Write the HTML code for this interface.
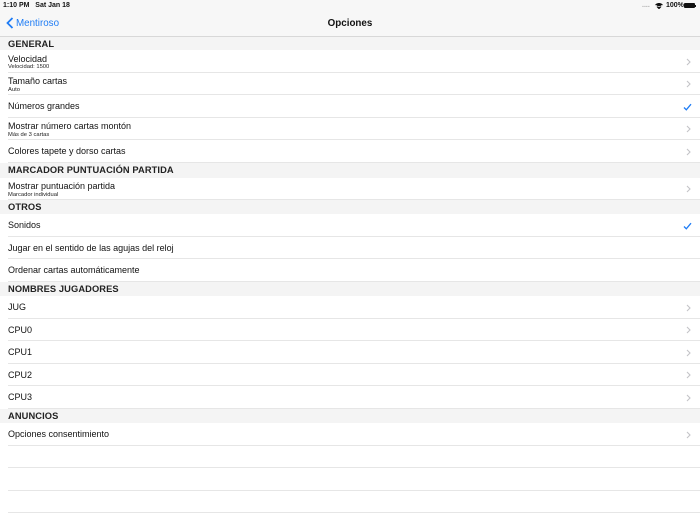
<!DOCTYPE html>
<html><head><meta charset="utf-8"><style>
*{margin:0;padding:0;box-sizing:border-box}
body{width:700px;height:525px;overflow:hidden;background:#fff;font-family:"Liberation Sans",sans-serif;color:#000;position:relative}
.nav{position:absolute;left:0;top:0;width:700px;height:37px;background:#f7f7f7;border-bottom:1px solid #d8d8d8}
.sb{position:absolute;top:2px;font-size:7px;font-weight:bold;color:#111}
.h{position:absolute;left:0;width:700px;background:#f4f4f4;font-size:9.3px;font-weight:bold;color:#222;padding-left:8px;letter-spacing:0.1px}
.r{position:absolute;left:0;width:700px;height:22.6px;background:#fff}
.r::after{content:"";position:absolute;left:8px;right:0;bottom:0;height:1px;background:#e6e6e6}
.t{position:absolute;left:8px;font-size:9px;color:#111}
.s{position:absolute;left:8px;font-size:5.8px;color:#222}
.ch{position:absolute;right:9px;top:7.5px;width:5px;height:8px}
.ck{position:absolute;right:8px;top:7.5px;width:9px;height:8px}
</style></head><body>
<div class="nav">
<div class="sb" style="left:3px">1:10 PM&nbsp;&nbsp; Sat Jan 18</div>
<div class="sb" style="left:642px;color:#aaa">....</div>
<svg style="position:absolute;left:655px;top:3px" width="8" height="6" viewBox="0 0 8 6"><path d="M0.5 2 Q4 -1 7.5 2 M1.8 3.3 Q4 1.2 6.2 3.3 M3 4.6 L4 5.6 L5 4.6 Z" stroke="#111" stroke-width="1.1" fill="#111"/></svg>
<div class="sb" style="left:666px">100%</div>
<div style="position:absolute;left:684px;top:3px;width:11px;height:5px;background:#111;border-radius:1px"></div>
<div style="position:absolute;left:695px;top:4.5px;width:1px;height:2px;background:#111"></div>
<svg style="position:absolute;left:6px;top:17px" width="8" height="12" viewBox="0 0 8 12"><path d="M6.5 1 L1.5 6 L6.5 11" stroke="#1e7cf5" stroke-width="1.8" fill="none"/></svg>
<div style="position:absolute;left:16px;top:18px;font-size:9.8px;color:#1e7cf5">Mentiroso</div>
<div style="position:absolute;left:0;width:700px;top:18px;text-align:center;font-size:9.8px;font-weight:bold;color:#111">Opciones</div>
</div>

<div class="h" style="top:37px;height:13px;line-height:14px">GENERAL</div>
<div class="r" style="top:50px"><div class="t" style="top:3.5px">Velocidad</div><div class="s" style="top:14px">Velocidad: 1500</div><svg class="ch" viewBox="0 0 5 8"><path d="M1 1L4 4L1 7" stroke="#c4c4c8" stroke-width="1.1" fill="none"/></svg></div>
<div class="r" style="top:72.6px"><div class="t" style="top:3.5px">Tamaño cartas</div><div class="s" style="top:14px">Auto</div><svg class="ch" viewBox="0 0 5 8"><path d="M1 1L4 4L1 7" stroke="#c4c4c8" stroke-width="1.1" fill="none"/></svg></div>
<div class="r" style="top:95.2px"><div class="t" style="top:6px">Números grandes</div><svg class="ck" viewBox="0 0 9 8"><path d="M1 4.5L3.3 6.8L8 1.2" stroke="#1e7cf5" stroke-width="1.3" fill="none"/></svg></div>
<div class="r" style="top:117.8px"><div class="t" style="top:3.5px">Mostrar número cartas montón</div><div class="s" style="top:14px">Más de 3 cartas</div><svg class="ch" viewBox="0 0 5 8"><path d="M1 1L4 4L1 7" stroke="#c4c4c8" stroke-width="1.1" fill="none"/></svg></div>
<div class="r" style="top:140.4px"><div class="t" style="top:6px">Colores tapete y dorso cartas</div><svg class="ch" viewBox="0 0 5 8"><path d="M1 1L4 4L1 7" stroke="#c4c4c8" stroke-width="1.1" fill="none"/></svg></div>

<div class="h" style="top:163px;height:14.5px;line-height:15px">MARCADOR PUNTUACIÓN PARTIDA</div>
<div class="r" style="top:177.5px"><div class="t" style="top:3.5px">Mostrar puntuación partida</div><div class="s" style="top:14px">Marcador individual</div><svg class="ch" viewBox="0 0 5 8"><path d="M1 1L4 4L1 7" stroke="#c4c4c8" stroke-width="1.1" fill="none"/></svg></div>

<div class="h" style="top:200px;height:14px;line-height:15px">OTROS</div>
<div class="r" style="top:214px"><div class="t" style="top:6px">Sonidos</div><svg class="ck" viewBox="0 0 9 8"><path d="M1 4.5L3.3 6.8L8 1.2" stroke="#1e7cf5" stroke-width="1.3" fill="none"/></svg></div>
<div class="r" style="top:236.6px"><div class="t" style="top:6px">Jugar en el sentido de las agujas del reloj</div></div>
<div class="r" style="top:259.2px"><div class="t" style="top:6px">Ordenar cartas automáticamente</div></div>

<div class="h" style="top:281.8px;height:14.2px;line-height:15px">NOMBRES JUGADORES</div>
<div class="r" style="top:296px"><div class="t" style="top:6px">JUG</div><svg class="ch" viewBox="0 0 5 8"><path d="M1 1L4 4L1 7" stroke="#c4c4c8" stroke-width="1.1" fill="none"/></svg></div>
<div class="r" style="top:318.6px"><div class="t" style="top:6px">CPU0</div><svg class="ch" viewBox="0 0 5 8"><path d="M1 1L4 4L1 7" stroke="#c4c4c8" stroke-width="1.1" fill="none"/></svg></div>
<div class="r" style="top:341.2px"><div class="t" style="top:6px">CPU1</div><svg class="ch" viewBox="0 0 5 8"><path d="M1 1L4 4L1 7" stroke="#c4c4c8" stroke-width="1.1" fill="none"/></svg></div>
<div class="r" style="top:363.8px"><div class="t" style="top:6px">CPU2</div><svg class="ch" viewBox="0 0 5 8"><path d="M1 1L4 4L1 7" stroke="#c4c4c8" stroke-width="1.1" fill="none"/></svg></div>
<div class="r" style="top:386.4px"><div class="t" style="top:6px">CPU3</div><svg class="ch" viewBox="0 0 5 8"><path d="M1 1L4 4L1 7" stroke="#c4c4c8" stroke-width="1.1" fill="none"/></svg></div>

<div class="h" style="top:409px;height:14px;line-height:15px">ANUNCIOS</div>
<div class="r" style="top:423px"><div class="t" style="top:6px">Opciones consentimiento</div><svg class="ch" viewBox="0 0 5 8"><path d="M1 1L4 4L1 7" stroke="#c4c4c8" stroke-width="1.1" fill="none"/></svg></div>
<div class="r" style="top:445.6px"></div>
<div class="r" style="top:468.2px"></div>
<div class="r" style="top:490.8px"></div>
</body></html>
